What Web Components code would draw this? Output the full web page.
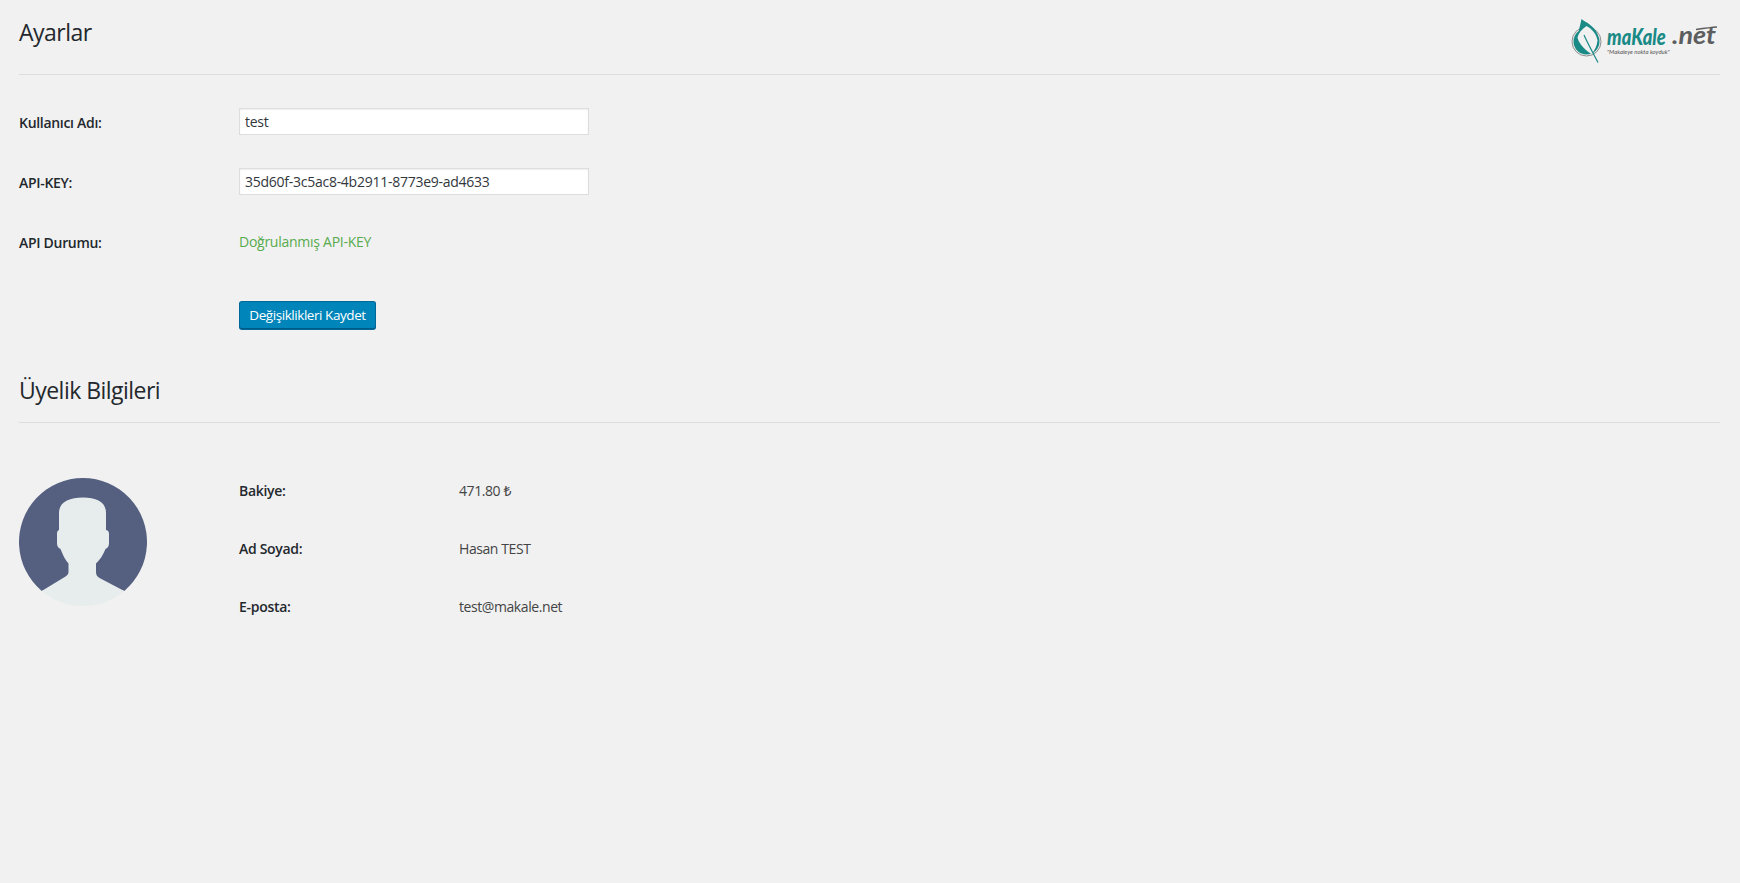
<!DOCTYPE html>
<html lang="tr"><head><meta charset="utf-8"><title>Ayarlar</title>
<style>
html,body{margin:0;padding:0;background:#f1f1f1;height:100%}
body{font:14px/19px "Open Sans","Noto Sans",sans-serif;color:#444}
</style></head><body>
<settings-page>
  <section-head title="Ayarlar" first><makale-logo></makale-logo></section-head>
  <form-row label="Kullanıcı Adı:" lead><text-field value="test"></text-field></form-row>
  <form-row label="API-KEY:"><text-field value="35d60f-3c5ac8-4b2911-8773e9-ad4633"></text-field></form-row>
  <form-row label="API Durumu:"><span style="display:block;margin-bottom:2px;color:#58ab4e;letter-spacing:-.26px">Doğrulanmış API-KEY</span></form-row>
  <form-row action><primary-button>Değişiklikleri Kaydet</primary-button></form-row>
  <section-head title="Üyelik Bilgileri"></section-head>
  <member-panel>
    <user-avatar slot="avatar"></user-avatar>
    <info-row label="Bakiye:">471.80 ₺</info-row>
    <info-row label="Ad Soyad:">Hasan TEST</info-row>
    <info-row label="E-posta:">test@makale.net</info-row>
  </member-panel>
</settings-page>
<script>
function def(name, html, init){
  customElements.define(name, class extends HTMLElement{
    constructor(){super();this.attachShadow({mode:'open'}).innerHTML=html;}
    connectedCallback(){ if(init) init(this,this.shadowRoot); }
  });
}
def('settings-page',`<style>:host{display:block;padding:0 20px 0 19px}</style><slot></slot>`);
def('section-head',`<style>
:host{display:flex;justify-content:space-between;align-items:flex-start;height:60px;border-bottom:1px solid #ddd;margin-top:15px}
:host([first]){margin-top:0;height:74px}
h1{margin:0;padding-top:14px;font-size:23px;line-height:29px;font-weight:400;color:#23282d;letter-spacing:-.53px}
:host([first]) h1{padding-top:18px}
</style><h1></h1><slot></slot>`,(el,r)=>{r.querySelector('h1').textContent=el.getAttribute('title')});
def('form-row',`<style>
:host{display:grid;grid-template-columns:220px 350px;align-items:center;height:60px}
:host([lead]){margin-top:17px}
:host([action]){height:60px;margin-top:13px;padding-bottom:2px}
b{font-weight:600;color:#23282d;letter-spacing:-.3px}
</style><b></b><div><slot></slot></div>`,(el,r)=>{r.querySelector('b').textContent=el.getAttribute('label')||''});
def('text-field',`<style>
:host{display:block;margin-bottom:2px}
input{display:block;box-sizing:border-box;width:350px;height:27px;margin:0;padding:2px 5px;border:1px solid #ddd;background:#fff;color:#32373c;font:14px/19px "Open Sans","Noto Sans",sans-serif;letter-spacing:-.26px;outline:0;border-radius:0;box-shadow:inset 0 1px 2px rgba(0,0,0,.07)}
</style><input type="text">`,(el,r)=>{r.querySelector('input').setAttribute('value',el.getAttribute('value'))});
def('primary-button',`<style>
:host{display:block}
button{display:block;box-sizing:border-box;height:28px;width:137px;margin:0;padding:0;border:1px solid #006799;border-bottom-color:#005a87;border-radius:3px;background:#0085ba;color:#fff;font:13.500px/26px "Open Sans","Noto Sans",sans-serif;letter-spacing:-.44px;box-shadow:0 1px 0 #006799}
</style><button type="button"><slot></slot></button>`);
def('member-panel',`<style>
:host{display:flex;padding-top:55px}
.a{width:220px;flex:none}
.r{display:flex;flex-direction:column;padding-top:3px}
</style><div class="a"><slot name="avatar"></slot></div><div class="r"><slot></slot></div>`);
def('info-row',`<style>
:host{display:grid;grid-template-columns:220px auto;height:58px;line-height:19px}
b{font-weight:600;color:#23282d;letter-spacing:-.3px}
span{letter-spacing:-.42px}
</style><b></b><span><slot></slot></span>`,(el,r)=>{r.querySelector('b').textContent=el.getAttribute('label')});
def('user-avatar',`<style>:host{display:block;width:128px;height:128px}svg{display:block}</style>
<svg width="128" height="128" viewBox="0 0 128 128"><defs><clipPath id="c"><circle cx="64" cy="64" r="64"/></clipPath></defs>
<path fill="#556080" d="M22.700 112.900A64 64 0 1 1 105.300 112.900L64 100Z"/>
<path clip-path="url(#c)" fill="#e7eced" d="M64 19.500C50 19.500 40 24 40 35V52C38.500 52.500 38 54 38 56V65C38 68 39 70 41.500 71C44 77 46 82 49.500 85.500V94C49.500 96 48.500 97 46.500 98.500L22.700 112.900L10 132H118L105.300 112.900L80.500 100C78 98.500 77 96.500 77 94V85.500C81 82 84 77 86.500 71C89 70 90 68 90 65V56C90 54 89.500 52.500 87 52V35C87 24 78 19.500 64 19.500Z"/></svg>`);
def('makale-logo',`<style>:host{display:block;width:148px;height:50px;margin:17px 1px 0 0}svg{display:block;overflow:visible}</style>
<svg width="148" height="50" viewBox="0 0 148 50">
<circle cx="15.500" cy="24.500" r="14.500" fill="none" stroke="#8a8c8e" stroke-width="1"/>
<circle cx="15.500" cy="24.500" r="13" fill="#1a8a86"/>
<path fill="#1a8a86" d="M10.500 2C13 4.500 16 5 18 7C22 10 26 14 27 19L7 20C7 14 9.500 8 10.500 2Z"/>
<path fill="#f1f1f1" d="M15.500 9C11 12 7.500 16 6.500 20.500C8 27 14 33 20.500 37C24 33.500 26 28.500 26.500 23.500C25.500 17 21 12 15.500 9Z"/>
<path stroke="#1a8a86" stroke-width="1.200" fill="none" d="M13 18C16 25 21 34 27 45.500"/>
<g font-family="Lato" font-style="italic">
<text transform="translate(36 28) scale(.92 1.15)" font-weight="900" font-size="20" fill="#1a8a86">maKale</text>
<text transform="translate(101 27) scale(1.35 1.2)" font-weight="700" font-size="20" fill="#5c5d5f">.net</text>
<text x="36" y="37" font-size="6" fill="#555">"Makaleye nokta koyduk"</text>
</g>
<path d="M125 12.500C132 11.500 139 10.500 146 10" stroke="#5c5d5f" stroke-width="1.500" fill="none"/>
</svg>`);
</script>
</body></html>
